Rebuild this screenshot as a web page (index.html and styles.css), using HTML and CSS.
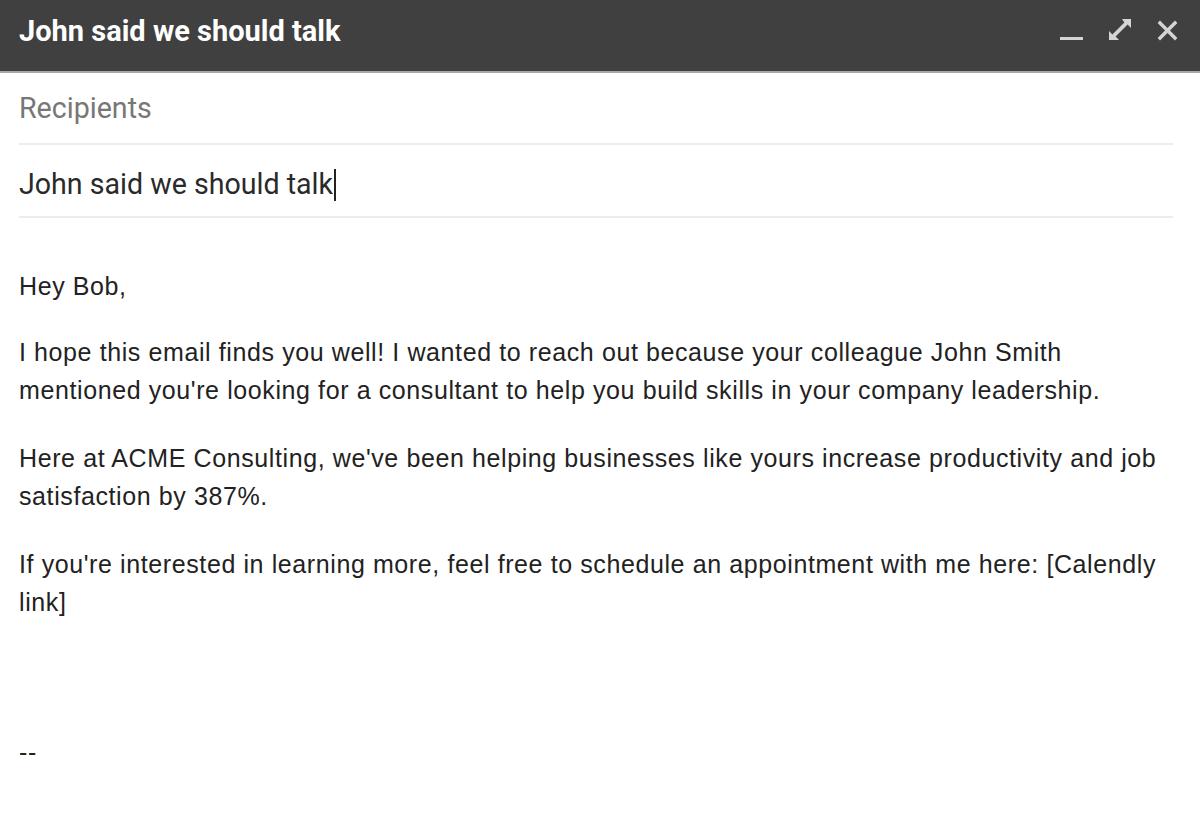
FILE: index.html
```html
<!DOCTYPE html>
<html>
<head>
<meta charset="utf-8">
<link rel="stylesheet" href="styles.css">
</head>
<body>
<div class="compose">
  <div class="titlebar">
    <div class="title">John said we should talk</div>
    <div class="controls">
      <svg class="ico min" width="24" height="24" viewBox="0 0 24 24"><rect x="1" y="19" width="23" height="3" fill="#d4d4d4"/></svg>
      <svg class="ico exp" width="24" height="24" viewBox="0 0 24 24"><polygon fill="#d4d4d4" points="14,1 23,1 23,10 19.6,6.6 7.6,18.6 11,22 1,22 1,13 4.4,16.4 16.4,4.4"/></svg>
      <svg class="ico cls" width="24" height="24" viewBox="0 0 24 24"><g stroke="#d4d4d4" stroke-width="3.4" stroke-linecap="square"><line x1="5" y1="5" x2="20" y2="20"/><line x1="20" y1="5" x2="5" y2="20"/></g></svg>
    </div>
  </div>
  <div class="fields">
    <div class="field recipients">Recipients</div>
    <div class="field subject">John said we should talk<span class="caret"></span></div>
  </div>
  <div class="body">
    <p class="greet">Hey Bob,</p>
    <p>I hope this email finds you well! I wanted to reach out because your colleague John Smith mentioned you're looking for a consultant to help you build skills in your company leadership.</p>
    <p>Here at ACME Consulting, we've been helping businesses like yours increase productivity and job satisfaction by 387%.</p>
    <p>If you're interested in learning more, feel free to schedule an appointment with me here: [Calendly link]</p>
    <p class="sig">--</p>
  </div>
</div>
</body>
</html>
```
FILE: styles.css
```css
html, body { margin: 0; padding: 0; background: #fff; }
body { width: 1200px; height: 825px; overflow: hidden; }
.compose { width: 1200px; }
.titlebar {
  height: 73px;
  background: #404040;
  display: flex;
  align-items: center;
  justify-content: space-between;
  padding: 0 21px 0 19px;
  box-sizing: border-box;
  border-bottom: 2px solid #a8a8a8;
}
.title {
  font-family: Roboto, "Liberation Sans", sans-serif;
  font-weight: bold;
  font-size: 29px;
  color: #ffffff;
  margin-top: -9px;
}
.controls { display: flex; align-items: center; margin-top: -11px; }
.ico { display: block; }
.exp { margin-left: 25px; }
.cls { margin-left: 23px; }
.fields { padding: 0 27px 0 19px; }
.field {
  font-family: Roboto, "Liberation Sans", sans-serif;
  font-size: 28.6px;
  border-bottom: 2px solid #ececec;
  box-sizing: border-box;
}
.recipients { height: 72px; line-height: 70px; color: #777; }
.subject { height: 73px; line-height: 78px; color: #2a2a2a; }
.caret { display: inline-block; width: 2px; height: 32px; background: #222; vertical-align: -7px; margin-left: 1px; }
.body {
  padding: 49px 27px 0 19px;
  font-family: "Liberation Sans", Arial, sans-serif;
  font-size: 25px;
  letter-spacing: 0.6px;
  line-height: 38px;
  color: #222;
}
.body p { margin: 0 0 30px 0; }
.body .greet { margin-bottom: 28px; }
.body .sig { margin-top: 112px; }
```
